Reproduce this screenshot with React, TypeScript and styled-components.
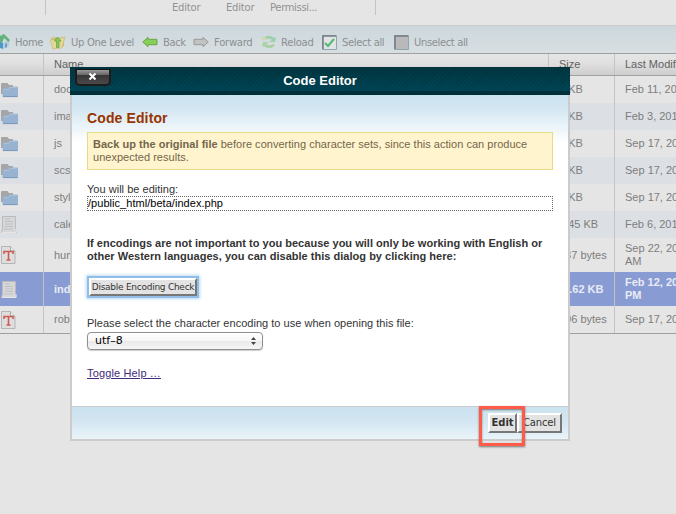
import React from "react";
import styled, { createGlobalStyle } from "styled-components";

const GlobalStyle = createGlobalStyle`
  * { box-sizing: border-box; }
  body { margin: 0; background: #e5e5e5; overflow: hidden; }
`;

const Page = styled.main`
  position: relative;
  width: 676px;
  height: 514px;
  overflow: hidden;
  background: #e5e5e5;
  color: #7d7d7d;
  font: 11px/13px "Liberation Sans", Arial, sans-serif;
`;

const Ribbon = styled.header`
  display: flex;
  height: 26px;
  border-bottom: 1px solid #cbcbcb;
  color: #929292;
  font: 10px/12px "DejaVu Sans", Verdana, sans-serif;
`;

const RibbonGroup = styled.div<{ $width: number; $indent: number }>`
  display: flex;
  width: ${(p) => p.$width}px;
  height: 15px;
  padding-left: ${(p) => p.$indent}px;
  border-right: 1px solid #c4c4c4;
`;

const RibbonItem = styled.div<{ $width: number; $tracking: number }>`
  width: ${(p) => p.$width}px;
  padding-top: 2px;
  white-space: nowrap;
  letter-spacing: ${(p) => p.$tracking}px;
`;

const Toolbar = styled.nav`
  display: flex;
  height: 28px;
  align-items: center;
  padding-top: 5px;
  border-bottom: 1px solid #a0a0a0;
  background: linear-gradient(#ccd7dd, #d8dfe2);
`;

const ToolItem = styled.div<{ $width: number; $icon: number; $tracking: number }>`
  display: grid;
  grid-template-columns: ${(p) => p.$icon}px auto;
  flex: none;
  width: ${(p) => p.$width}px;
  align-items: center;
  justify-content: start;
  color: #8c8f91;
  font: 10px/14px "DejaVu Sans", Verdana, sans-serif;
  letter-spacing: ${(p) => p.$tracking}px;
  white-space: nowrap;
  svg { display: block; }
  span { padding-top: 2px; }
`;

const Row = styled.div<{ $tone?: "head" | "alt" | "selected"; $height: number }>`
  display: grid;
  grid-template-columns: 44px 505px 66px 180px;
  height: ${(p) => p.$height}px;
  background: ${(p) =>
    p.$tone === "head" ? "linear-gradient(#e5e5e5, #e1e1e1 40%, #cecece)"
    : p.$tone === "alt" ? "#dce0e5"
    : p.$tone === "selected" ? "#889bd3" : "#e5e5e5"};
  color: ${(p) => (p.$tone === "head" ? "#626262" : p.$tone === "selected" ? "#e8ebf5" : "#7d7d7d")};
  font-weight: ${(p) => (p.$tone === "selected" ? 700 : 400)};
  border-bottom: ${(p) => (p.$tone === "head" ? "1px solid #a0a0a0" : "0")};
`;

const Table = styled.section`
  border-bottom: 1px solid #a0a0a0;
`;

const Cell = styled.div<{ $indent?: number }>`
  display: flex;
  align-items: center;
  min-width: 0;
  padding-left: ${(p) => p.$indent ?? 10}px;
  border-right: 1px solid #c4c4c4;
  white-space: pre;
`;

const Dialog = styled.section`
  position: absolute;
  left: 70px;
  top: 67px;
  width: 500px;
  height: 374px;
  display: flex;
  flex-direction: column;
  color: #333;
`;

const TitleBar = styled.header`
  position: relative;
  flex: none;
  height: 28px;
  border-bottom: 4px solid #00303a;
  background:
    repeating-linear-gradient(135deg, transparent 0 2px, rgba(0, 18, 26, 0.14) 2px 3px),
    linear-gradient(#003640, #004657);
  color: #fff;
  text-align: center;
  font-size: 13px;
  font-weight: 700;
  line-height: 27px;
`;

const CloseButton = styled.button`
  position: absolute;
  left: 5px;
  top: 2px;
  width: 36px;
  height: 17px;
  display: flex;
  justify-content: center;
  align-items: center;
  padding: 0 2px 1px 0;
  border: 2px solid #1e1b1c;
  border-top: 1px solid #151515;
  border-radius: 1px 1px 5px 5px;
  background: linear-gradient(#999 0, #686868 34%, #373435 36%, #4c494a);
`;

const Body = styled.div`
  flex: 1;
  padding: 13px 15px 0;
  border: solid #cbcbcb;
  border-width: 0 2px;
  background: linear-gradient(#cbe2ef 0, #d4e7f2 14px, #fff 47px);
`;

const Heading = styled.h1`
  height: 24px;
  margin: 0;
  color: #993300;
  font-size: 14px;
  font-weight: 700;
  line-height: 20px;
  letter-spacing: 0.12px;
`;

const Notice = styled.div`
  height: 38px;
  padding: 5px;
  border: 1px solid #e5dc83;
  background: #fff4cd;
  color: #73664b;
  white-space: nowrap;
  letter-spacing: 0.022px;
`;

const Label = styled.div<{ $gap: number }>`
  margin-top: ${(p) => p.$gap}px;
  white-space: nowrap;
  letter-spacing: 0.022px;
`;

const PathBox = styled.div`
  height: 15px;
  border: 1px dotted #666;
  color: #000;
  line-height: 12px;
  letter-spacing: 0.04px;
`;

const BevelButton = styled.button<{ $width: number; $strong?: boolean; $ring?: boolean }>`
  display: flex;
  align-items: center;
  justify-content: center;
  width: ${(p) => p.$width}px;
  height: ${(p) => (p.$ring ? 18 : 20)}px;
  margin: ${(p) => (p.$ring ? "15px 0 0 2px" : "0")};
  padding: 0;
  border: 2px solid;
  border-color: #fff #777 #777 #fff;
  background: #e3e3e3;
  box-shadow: ${(p) => (p.$ring ? "0 0 0 2px #91bee9, 0 0 3px 3px #b9d8f3" : "none")};
  color: #333;
  font: ${(p) => (p.$strong ? 700 : 400)} ${(p) => (p.$ring ? 9 : 10)}px/12px "DejaVu Sans", Verdana, sans-serif;
  letter-spacing: ${(p) => (p.$ring ? -0.26 : p.$strong ? -0.1 : -0.15)}px;
  white-space: nowrap;
`;

const SelectBox = styled.div`
  display: flex;
  align-items: center;
  justify-content: space-between;
  width: 176px;
  height: 18px;
  margin-top: 2px;
  padding: 0 6px 0 7px;
  border: 1px solid #8f8f8f;
  border-radius: 4px;
  background: linear-gradient(#fff, #f7f7f7 48%, #eaeaea 52%, #f5f5f5);
  box-shadow: 0 1px 1px #ccc;
  color: #000;
  font: 11px/14px "DejaVu Sans", "Lucida Grande", sans-serif;
`;

const HelpLink = styled.a`
  display: block;
  margin-top: 17px;
  color: #3f2d7b;
  text-decoration: underline;
  letter-spacing: 0.14px;
`;

const Footer = styled.footer`
  display: flex;
  flex: none;
  height: 35px;
  justify-content: flex-end;
  padding: 6px 6px 0 0;
  border: 2px solid #cbcbcb;
  border-top-width: 1px;
  background: linear-gradient(#cbe2ef, #d3e6f1 45%, #eaf4f9);
`;

const Highlight = styled.div`
  position: absolute;
  left: 479px;
  top: 406px;
  width: 46px;
  height: 40px;
  border: 3px solid #ff5b48;
  box-shadow: 0 1px 2px #777, inset 0 1px 2px #777;
`;

const FolderIcon = () => (
  <svg width="19" height="16" viewBox="0 0 19 16">
    <path d="M1 12V2q0-1 1-1h5.500l1.500 2h4v9z" fill="#a5a6a5" />
    <path d="M3.500 15q-1 0-1-1V7.500q0-1 1-1H8l1.500-2H17q1 0 1 1V14q0 1-1 1z" fill="#98b3d1" />
    <path d="M3 14.600h14.500" stroke="#7793b5" strokeWidth=".9" />
    <path d="M4 7.500h4.500l1.500-2h7" fill="none" stroke="#adc3db" strokeWidth=".8" />
  </svg>
);

const FileIcon = () => (
  <svg width="18" height="19" viewBox="0 0 18 19">
    <path d="M2.500 1.500h13v12l1 4h-15l1-4z" fill="#d5d7d8" stroke="#bbb" />
    <path d="M5 4h5M5 6.500h8M5 9h8M5 11.500h8M4 14h9" stroke="#bfc1c2" />
    <path d="M2 17.500h14M16 14v3" stroke="#f0f0f0" strokeWidth=".8" />
  </svg>
);

const TextFileIcon = () => (
  <svg width="17" height="20" viewBox="0 0 17 20">
    <path d="M1.500 1.500h9l4.500 4.500v12.500H1.500z" fill="#dedede" stroke="#b5b5b5" />
    <path d="M10.500 1.500V6H15" fill="#eee" stroke="#aaa" />
    <path d="M4 9V6.500h9V9M8.500 7v8M6.500 15h4" fill="none" stroke="#cc5c53" strokeWidth="1.600" />
  </svg>
);

const HomeIcon = () => (
  <svg width="12" height="16" viewBox="0 0 12 16">
    <path d="M0 7l3 2v6l-3-1z" fill="#4c99c7" />
    <path d="M3 9l6-4v7.500L3 15z" fill="#b7cddd" />
    <path d="M0 2l4-2 6 6-1.500 2L4 4 2 9 0 7z" fill="#62b37c" />
    <path d="M5 10l2-1v4l-2 1z" fill="#6d9fc2" />
  </svg>
);

const UpIcon = () => (
  <svg width="16" height="15" viewBox="0 0 16 15">
    <path d="M1 3l5-1 1 1 7-1v9L3 14z" fill="#d2bd70" />
    <path d="M0 5l8-1 7-2-3 11-9 1z" fill="#e4d69b" stroke="#c5af69" strokeWidth=".5" />
    <path d="M7.500 2L4.500 6H6.500v6.500h2.500V6H11z" fill="#83c95d" stroke="#69a83f" strokeWidth=".8" />
  </svg>
);

const ArrowIcon = ({ forward = false }: { forward?: boolean }) => (
  <svg width="16" height="12" viewBox="0 0 16 12">
    <g transform={forward ? "translate(16 0) scale(-1 1)" : undefined}>
      <path d="M.8 6L6 1.300v2h9v5.400H6v2z" fill={forward ? "#c2c2c2" : "#86cf5b"} stroke={forward ? "#999" : "#69a646"} />
    </g>
  </svg>
);

const ReloadIcon = () => (
  <svg width="16" height="16" viewBox="0 0 16 16">
    <path d="M2 5c2-4 8-4 11-1l2-1-1 5H8l3-2C8 4 5 5 4 6z" fill="#9ed0a9" />
    <path d="M14 11c-2 4-8 4-11 1l-2 1 1-5h6l-3 2c3 2 6 1 7 0z" fill="#aad1a4" />
    <path d="M0 3h4l2 2-4 2z" fill="#d0d8b0" />
  </svg>
);

const CheckIcon = ({ checked = false }: { checked?: boolean }) => (
  <svg width="15" height="15" viewBox="0 0 15 15">
    <path d="M.5.5h14v14H.5z" fill={checked ? "#dfe4e4" : "#b9b9b9"} stroke="#91a3b0" />
    <path d="M1 14V1h13" fill="none" stroke="#747d82" strokeWidth="1.500" />
    {checked && <path d="M3 8l3 3 6-7" fill="none" stroke="#55b873" strokeWidth="2" />}
  </svg>
);

const tools = [
  { label: "Home", icon: <HomeIcon />, width: 50, inset: 15, tracking: -0.35 },
  { label: "Up One Level", icon: <UpIcon />, width: 92, inset: 21, tracking: -0.32 },
  { label: "Back", icon: <ArrowIcon />, width: 51, inset: 21, tracking: -0.4 },
  { label: "Forward", icon: <ArrowIcon forward />, width: 68, inset: 21, tracking: -0.25 },
  { label: "Reload", icon: <ReloadIcon />, width: 61, inset: 20, tracking: -0.25 },
  { label: "Select all", icon: <CheckIcon checked />, width: 72, inset: 20, tracking: -0.34 },
  { label: "Unselect all", icon: <CheckIcon />, width: 90, inset: 20, tracking: -0.38 },
];

const files = [
  { name: "docs", size: "4 KB", date: "Feb 11, 2013", kind: "folder" },
  { name: "images", size: "4 KB", date: "Feb 3, 2013", kind: "folder" },
  { name: "js", size: "4 KB", date: "Sep 17, 2012", kind: "folder" },
  { name: "scss", size: "4 KB", date: "Sep 17, 2012", kind: "folder" },
  { name: "styles", size: "4 KB", date: "Sep 17, 2012", kind: "folder" },
  { name: "calendar.php", size: "1.45 KB", date: "Feb 6, 2013", kind: "file" },
  { name: "humans.txt", size: "137 bytes", date: "Sep 22, 2012\nAM", kind: "text", tall: true },
  { name: "index.php", size: "14.62 KB", date: "Feb 12, 2013\nPM", kind: "file", tall: true, selected: true },
  { name: "robots.txt", size: "106 bytes", date: "Sep 17, 2012", kind: "text" },
];

export default function App() {
  return (
    <>
      <GlobalStyle />
      <Page>
        <Ribbon>
          <RibbonGroup $width={46} $indent={0} />
          <RibbonGroup $width={330} $indent={126}>
            <RibbonItem $width={54} $tracking={-0.2}>Editor</RibbonItem>
            <RibbonItem $width={44} $tracking={-0.2}>Editor</RibbonItem>
            <RibbonItem $width={60} $tracking={-0.35}>Permissi...</RibbonItem>
          </RibbonGroup>
        </Ribbon>
        <Toolbar>
          {tools.map((t) => (
            <ToolItem key={t.label} $width={t.width} $icon={t.inset} $tracking={t.tracking}>
              {t.icon}<span>{t.label}</span>
            </ToolItem>
          ))}
        </Toolbar>
        <Table>
          <Row $tone="head" $height={22}>
            <Cell /><Cell>Name</Cell><Cell>Size</Cell><Cell>Last Modified</Cell>
          </Row>
          {files.map((f, i) => (
            <Row key={f.name} $height={f.tall ? 34 : 27} $tone={f.selected ? "selected" : i % 2 ? "alt" : undefined}>
              <Cell $indent={0}>{f.kind === "folder" ? <FolderIcon /> : f.kind === "text" ? <TextFileIcon /> : <FileIcon />}</Cell>
              <Cell>{f.name}</Cell>
              <Cell $indent={f.selected ? 8 : 10}>{f.size}</Cell>
              <Cell>{f.date}</Cell>
            </Row>
          ))}
        </Table>
        <Dialog>
          <TitleBar>
            <CloseButton aria-label="Close">
              <svg width="9" height="9" viewBox="0 0 9 9"><path d="M1.500 1.500l6 6m0-6l-6 6" stroke="#fff" strokeWidth="2" /></svg>
            </CloseButton>
            Code Editor
          </TitleBar>
          <Body>
            <Heading>Code Editor</Heading>
            <Notice>
              <b>Back up the original file</b> before converting character sets, since this action can produce<br />unexpected results.
            </Notice>
            <Label $gap={13}>You will be editing:</Label>
            <PathBox>/public_html/beta/index.php</PathBox>
            <Label $gap={26}>
              <b>If encodings are not important to you because you will only be working with English or<br />other Western languages, you can disable this dialog by clicking here:</b>
            </Label>
            <BevelButton $width={108} $ring>Disable Encoding Check</BevelButton>
            <Label $gap={21}>Please select the character encoding to use when opening this file:</Label>
            <SelectBox>
              utf–8
              <svg width="5" height="8" viewBox="0 0 5 8"><path d="M0 3L2.500 0 5 3zm0 2h5L2.500 8z" fill="#444" /></svg>
            </SelectBox>
            <HelpLink>Toggle Help …</HelpLink>
          </Body>
          <Footer>
            <BevelButton $width={29} $strong>Edit</BevelButton>
            <BevelButton $width={45}>Cancel</BevelButton>
          </Footer>
        </Dialog>
        <Highlight />
      </Page>
    </>
  );
}
